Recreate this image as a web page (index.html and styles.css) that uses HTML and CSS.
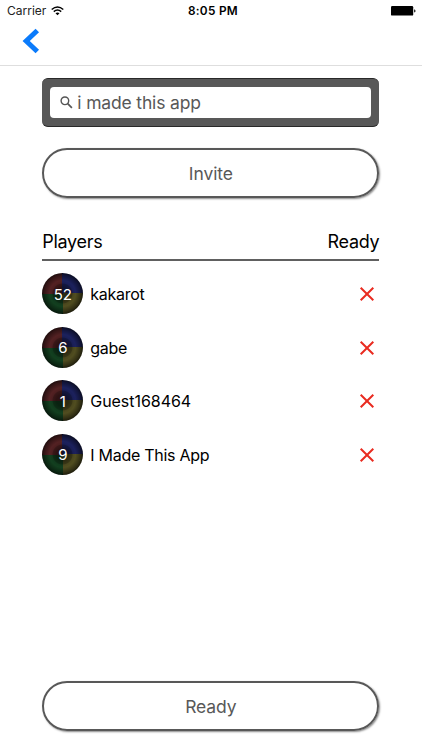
FILE: index.html
```html
<!DOCTYPE html>
<html lang="en">
<head>
<meta charset="utf-8">
<title>Invite Players</title>
<link rel="stylesheet" href="styles.css">
</head>
<body>
<header class="header">
  <div class="status">
    <div class="carrier"><span>Carrier</span>
      <svg width="13" height="10" viewBox="0 0 13 10" fill="none" stroke="#000" stroke-width="1.5"><path d="M.7 3.5Q6.5-1.4 12.3 3.5M2.8 5.6Q6.5 2.4 10.2 5.6"/><path d="M4.5 7.2Q6.5 5.6 8.5 7.2L6.5 9.3Z" fill="#000" stroke="none"/></svg>
    </div>
    <div class="time">8:05 PM</div>
    <svg class="battery" width="25" height="10" viewBox="0 0 25 10"><rect width="22.2" height="9.6" rx="1.2"/><path d="M23.2 3.2Q24.5 3.7 24.5 5T23.2 6.6Z"/></svg>
  </div>
  <svg class="back" width="18" height="26" viewBox="0 0 18 26"><path d="M15.3 2.5 4.2 13l11.1 10.5" fill="none" stroke="#0b7bfb" stroke-width="5"/></svg>
</header>
<main class="main">
  <div class="search">
    <div class="field">
      <svg width="13" height="13" viewBox="0 0 13 13" fill="none" stroke="#555"><circle cx="4.9" cy="4.8" r="3.8" stroke-width="1.4"/><path d="m7.7 7.6 4.2 4.2" stroke-width="1.7"/></svg>
      <span class="query">i made this app</span>
    </div>
  </div>
  <div class="button"><span class="label">Invite</span></div>
  <div class="heading"><span>Players</span><span>Ready</span></div>
  <ul class="list">
    <li><span class="badge"><b>52</b></span><span class="name">kakarot</span><svg class="cross" viewBox="0 0 14 14"><path d="m.7.7 12.6 12.6m0-12.6L.7 13.3"/></svg></li>
    <li><span class="badge"><b>6</b></span><span class="name">gabe</span><svg class="cross" viewBox="0 0 14 14"><path d="m.7.7 12.6 12.6m0-12.6L.7 13.3"/></svg></li>
    <li><span class="badge"><b>1</b></span><span class="name guest">Guest168464</span><svg class="cross" viewBox="0 0 14 14"><path d="m.7.7 12.6 12.6m0-12.6L.7 13.3"/></svg></li>
    <li><span class="badge"><b>9</b></span><span class="name">I Made This App</span><svg class="cross" viewBox="0 0 14 14"><path d="m.7.7 12.6 12.6m0-12.6L.7 13.3"/></svg></li>
  </ul>
  <div class="button bottom"><span class="label">Ready</span></div>
</main>
</body>
</html>
```
FILE: styles.css
```css
* { box-sizing: border-box; }
body {
  margin: 0;
  height: 750px;
  display: flex;
  flex-direction: column;
  overflow: hidden;
  background: #fff;
  color: #000;
  font-family: Inter, sans-serif;
}
svg { display: block; flex: none; }
.header { height: 66px; border-bottom: 1px solid #dedede; }
.status {
  height: 22px;
  padding: 0 6px 0 7px;
  display: grid;
  grid-template-columns: 1fr auto 1fr;
  align-items: center;
  font-size: 12px;
  line-height: 22px;
}
.carrier { display: flex; align-items: center; gap: 5px; color: #222; letter-spacing: 0; }
.carrier svg { margin-bottom: 1px; }
.time { padding-left: 3px; font-weight: 600; font-size: 11.8px; letter-spacing: .3px; }
.battery { justify-self: end; }
.back { margin: 6px 0 0 22px; }
.main { flex: 1; display: flex; flex-direction: column; padding: 12px 42.6px 19px 42.3px; }
.search {
  height: 49px;
  padding: 8px;
  background: #585858;
  border: solid #292929;
  border-width: 1px 0;
  border-radius: 6px;
}
.field {
  height: 31px;
  display: flex;
  align-items: center;
  gap: 4px;
  padding-left: 10px;
  background: #fff;
  border-radius: 4px;
  color: #585858;
  font-size: 17.5px;
}
.query { letter-spacing: -.16px; padding-bottom: 1px; }
.button {
  height: 50px;
  margin: 21px 0 0;
  display: flex;
  align-items: center;
  justify-content: center;
  border: 2px solid #585858;
  border-radius: 25px;
  box-shadow: 1px 1px 2px #888;
  color: #585858;
  font-size: 17.5px;
}
.label { padding-top: 1px; letter-spacing: -.1px; }
.heading {
  height: 33px;
  margin: 29.5px 0 12.5px;
  display: flex;
  justify-content: space-between;
  border-bottom: 2px solid #606060;
  font-size: 18px;
  line-height: 27px;
  letter-spacing: -.3px;
}
.list { margin: 0; padding: 0; list-style: none; display: grid; gap: 12.6px; }
.list li { height: 41px; display: flex; align-items: center; }
.badge {
  width: 41px;
  height: 41px;
  flex: none;
  display: grid;
  place-items: center;
  border-radius: 50%;
  background:
    radial-gradient(circle, #0008 0 6px, #0006 9.5px, #0003 10.5px, #0002 13px, #0007 18px, #000b 21px),
    conic-gradient(#20266b 25%, #5d5925 0 50%, #154924 0 75%, #602628 0);
}
.badge b { padding-top: 1px; color: #fff; font-size: 15px; font-weight: 400; }
.name { margin-left: 7px; padding-top: 1px; font-size: 16px; letter-spacing: -.28px; }
.guest { letter-spacing: -.05px; }
.cross { width: 14px; height: 14px; margin: 1px 5px 0 auto; overflow: visible; fill: none; stroke: #e92b20; stroke-width: 2; }
.bottom { margin-top: auto; }
```
